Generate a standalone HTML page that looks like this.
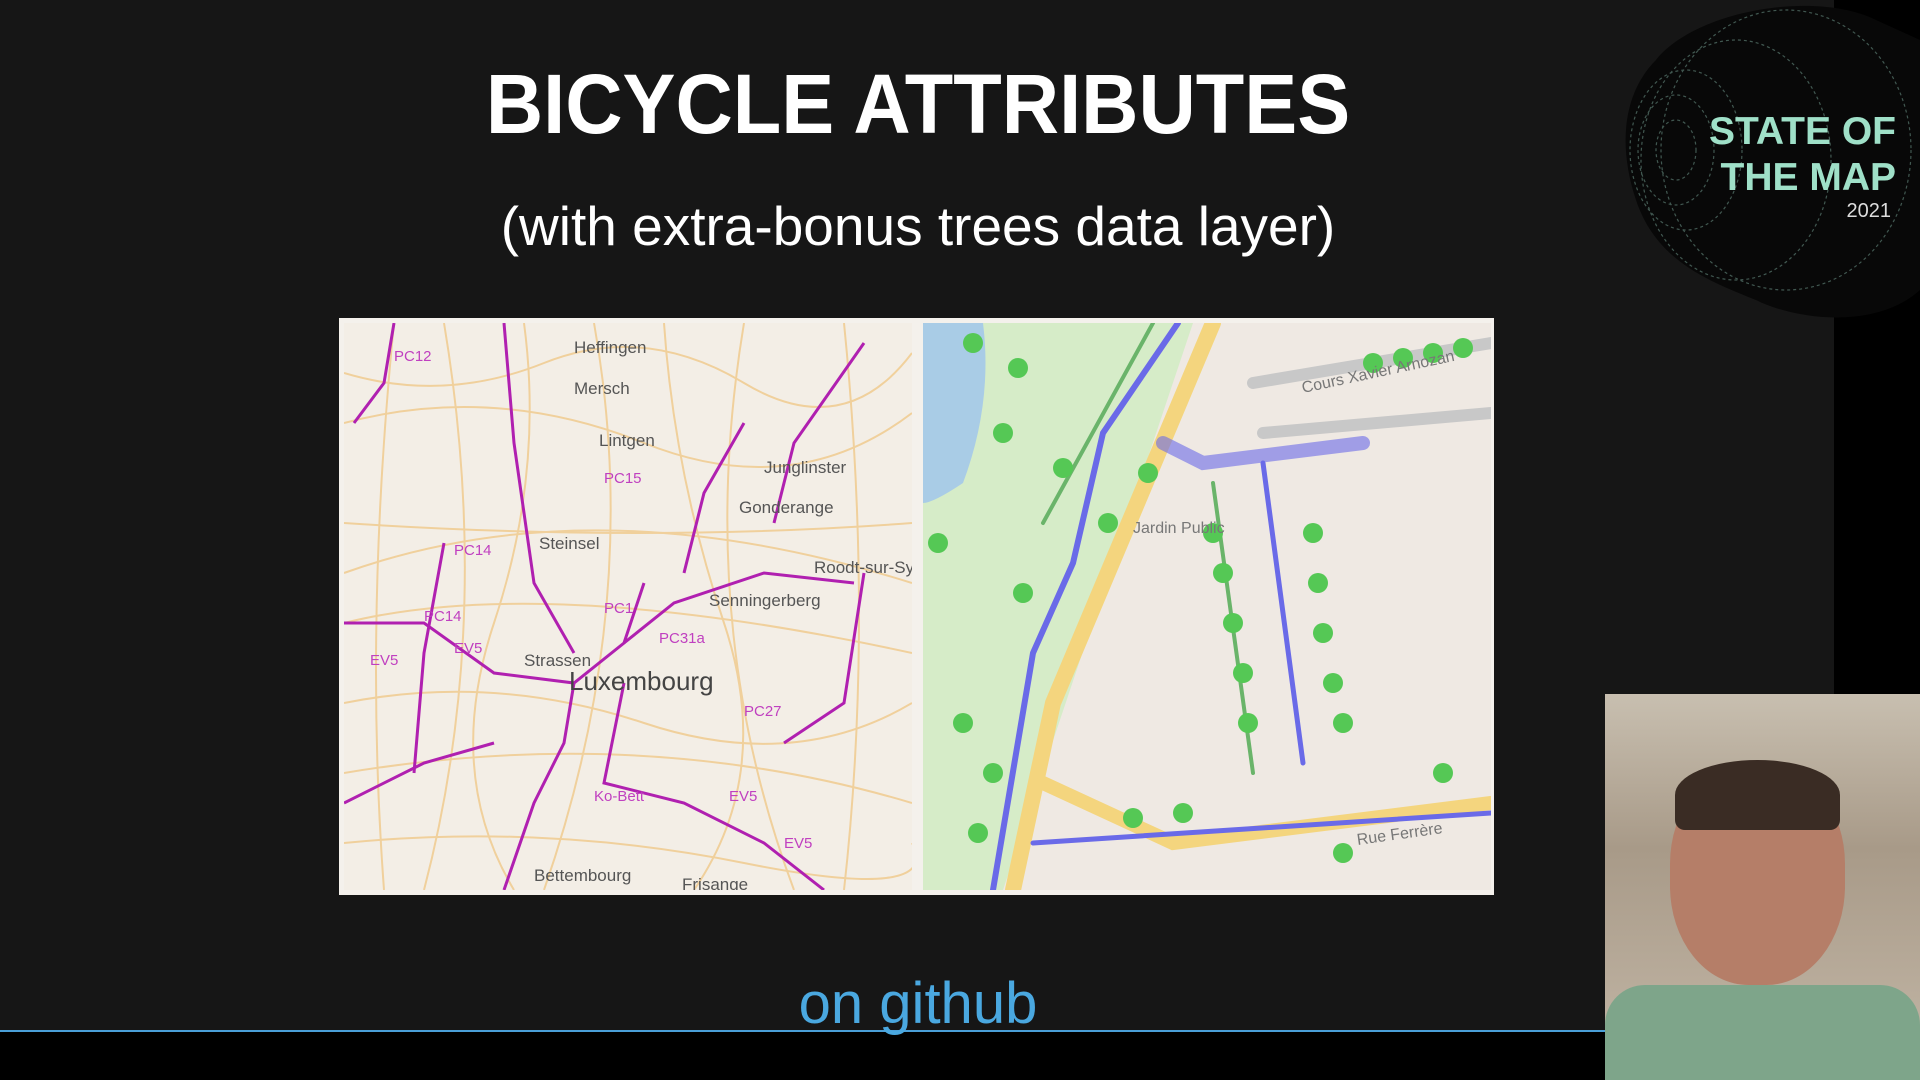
<!DOCTYPE html>
<html><head><meta charset="utf-8"><style>
body{margin:0;width:1920px;height:1080px;background:#161616;position:relative;overflow:hidden;font-family:"Liberation Sans",sans-serif}
.t{position:absolute;left:0;width:1836px;text-align:center;color:#fff}
</style></head><body>
<div style="position:absolute;left:1834px;top:0;width:86px;height:1080px;background:#000"></div>
<div style="position:absolute;left:0;top:1032px;width:1920px;height:48px;background:#000"></div>
<div style="position:absolute;left:0;top:1030px;width:1605px;height:2px;background:#4a9fd8"></div>
<div class="t" style="top:56px;font-size:84px;font-weight:bold;transform:scaleX(0.945);transform-origin:918px 0">BICYCLE ATTRIBUTES</div>
<div class="t" style="top:194px;font-size:55px">(with extra-bonus trees data layer)</div>
<div class="t" style="top:970px;font-size:58px;color:#4aa8e0">on github</div>
<svg style="position:absolute;left:1616px;top:0" width="304" height="325" viewBox="0 0 304 325">
<path d="M40 60 C80 10 200 -10 260 20 L304 40 L304 290 C260 330 180 320 140 300 C90 280 40 260 20 200 C0 140 10 90 40 60Z" fill="#080808"/>
<g fill="none" stroke="#5a7a70" stroke-width="1.2" stroke-dasharray="3 3" opacity=".7">
<ellipse cx="60" cy="150" rx="20" ry="30"/><ellipse cx="60" cy="150" rx="38" ry="55"/><ellipse cx="70" cy="150" rx="56" ry="80"/><ellipse cx="120" cy="160" rx="95" ry="120"/><ellipse cx="170" cy="150" rx="125" ry="140"/></g>
<text x="280" y="144" text-anchor="end" font-size="39" font-weight="bold" fill="#9fe0c8" font-family="Liberation Sans">STATE OF</text>
<text x="280" y="190" text-anchor="end" font-size="39" font-weight="bold" fill="#9fe0c8" font-family="Liberation Sans">THE MAP</text>
<text x="275" y="217" text-anchor="end" font-size="20" fill="#ddd" font-family="Liberation Sans">2021</text>
</svg>
<div style="position:absolute;left:339px;top:318px;width:1155px;height:577px;background:#f4f1ec"></div>
<svg style="position:absolute;left:344px;top:323px" width="568" height="567" viewBox="0 0 568 567">
<rect width="568" height="567" fill="#f3eee6"/>
<g fill="none" stroke="#f0c98a" stroke-width="2" opacity=".8">
<path d="M0 100 Q150 60 300 120 T568 90"/><path d="M0 300 Q200 250 568 330"/><path d="M100 0 Q150 300 80 567"/><path d="M400 0 Q350 300 450 567"/><path d="M0 450 Q300 400 568 480"/><path d="M250 0 Q300 280 200 567"/><path d="M0 200 Q300 220 568 200"/>
<path d="M0 50 Q100 80 200 40 T400 60 T568 30"/><path d="M0 380 Q150 350 300 400 T568 380"/><path d="M0 520 Q200 500 400 540 T568 520"/><path d="M50 0 Q20 300 40 567"/><path d="M500 0 Q530 300 500 567"/><path d="M320 0 Q330 150 380 300 T350 567"/><path d="M180 0 Q200 150 150 300 T170 567"/><path d="M0 250 Q250 160 568 260"/></g>
<g fill="none" stroke="#b020b0" stroke-width="3">
<path d="M50 0 L40 60 L10 100"/><path d="M160 0 L170 120 L190 260 L230 330"/><path d="M0 300 L80 300 L150 350 L230 360 L280 320 L300 260"/><path d="M230 360 L220 420 L190 480 L160 567"/><path d="M280 320 L330 280 L420 250 L510 260"/><path d="M400 100 L360 170 L340 250"/><path d="M520 20 L450 120 L430 200"/><path d="M280 360 L260 460 L340 480 L420 520 L480 567"/><path d="M0 480 L80 440 L150 420"/><path d="M520 250 L500 380 L440 420"/><path d="M100 220 L80 330 L70 450"/></g>
<g font-family="Liberation Sans" font-size="17" fill="#555"><text x="230" y="30">Heffingen</text><text x="230" y="71">Mersch</text><text x="255" y="123">Lintgen</text><text x="420" y="150">Junglinster</text><text x="395" y="190">Gonderange</text><text x="195" y="226">Steinsel</text><text x="470" y="250">Roodt-sur-Syre</text><text x="365" y="283">Senningerberg</text><text x="180" y="343">Strassen</text><text x="190" y="558">Bettembourg</text><text x="338" y="567">Frisange</text>
<text x="225" y="367" font-size="26" fill="#444">Luxembourg</text></g>
<g font-family="Liberation Sans" font-size="15" fill="#c040c0"><text x="50" y="38">PC12</text><text x="260" y="160">PC15</text><text x="110" y="232">PC14</text><text x="80" y="298">PC14</text><text x="26" y="342">EV5</text><text x="110" y="330">EV5</text><text x="260" y="290">PC1</text><text x="315" y="320">PC31a</text><text x="400" y="393">PC27</text><text x="385" y="478">EV5</text><text x="440" y="525">EV5</text><text x="250" y="478">Ko-Bett</text></g>
</svg>
<svg style="position:absolute;left:923px;top:323px" width="568" height="567" viewBox="0 0 568 567">
<rect width="568" height="567" fill="#efe9e3"/>
<path d="M0 0 L270 0 L80 567 L0 567Z" fill="#d6ecc8"/>
<path d="M0 0 L60 0 Q70 80 40 160 Q10 180 0 180Z" fill="#a9cce6"/>
<g fill="none" stroke-linecap="round">
<path d="M290 0 L130 380 L90 567" stroke="#f4d57e" stroke-width="16"/>
<path d="M120 460 L250 520 L568 480" stroke="#f4d57e" stroke-width="14"/>
<path d="M330 60 L568 20" stroke="#c8c8c8" stroke-width="12"/><path d="M340 110 L568 90" stroke="#c8c8c8" stroke-width="12"/>
<path d="M255 0 L180 110 L150 240 L110 330 L70 567" stroke="#6a6ae8" stroke-width="6"/>
<path d="M240 120 L280 140 L440 120" stroke="#6a6ae8" stroke-width="14" opacity=".6"/>
<path d="M340 140 L380 440" stroke="#6a6ae8" stroke-width="5"/>
<path d="M110 520 L568 490" stroke="#6a6ae8" stroke-width="5"/>
<path d="M230 0 L120 200" stroke="#6ab46a" stroke-width="4"/><path d="M290 160 L330 450" stroke="#6ab46a" stroke-width="4"/></g>
<g fill="#55c855"><circle cx="50" cy="20" r="10"/><circle cx="95" cy="45" r="10"/><circle cx="80" cy="110" r="10"/><circle cx="140" cy="145" r="10"/><circle cx="15" cy="220" r="10"/><circle cx="100" cy="270" r="10"/><circle cx="40" cy="400" r="10"/><circle cx="70" cy="450" r="10"/><circle cx="55" cy="510" r="10"/><circle cx="290" cy="210" r="10"/><circle cx="300" cy="250" r="10"/><circle cx="310" cy="300" r="10"/><circle cx="320" cy="350" r="10"/><circle cx="325" cy="400" r="10"/><circle cx="390" cy="210" r="10"/><circle cx="395" cy="260" r="10"/><circle cx="400" cy="310" r="10"/><circle cx="410" cy="360" r="10"/><circle cx="420" cy="400" r="10"/><circle cx="210" cy="495" r="10"/><circle cx="260" cy="490" r="10"/><circle cx="450" cy="40" r="10"/><circle cx="480" cy="35" r="10"/><circle cx="510" cy="30" r="10"/><circle cx="540" cy="25" r="10"/><circle cx="420" cy="530" r="10"/><circle cx="520" cy="450" r="10"/><circle cx="225" cy="150" r="10"/><circle cx="185" cy="200" r="10"/></g>
<g font-family="Liberation Sans" font-size="16" fill="#777"><text x="380" y="70" transform="rotate(-12 380 70)">Cours Xavier Arnozan</text><text x="210" y="210">Jardin Public</text><text x="520" y="510" transform="rotate(-8 520 510)" text-anchor="end">Rue Ferrère</text></g>
</svg>
<div style="position:absolute;left:1605px;top:694px;width:315px;height:386px;background:linear-gradient(#c8bfb0,#a89a88 40%,#c4b8a8)"></div>
<div style="position:absolute;left:1670px;top:765px;width:175px;height:220px;border-radius:45%;background:#b57e68"></div>
<div style="position:absolute;left:1675px;top:760px;width:165px;height:70px;border-radius:50% 50% 10px 10px;background:#3a2c24"></div>
<div style="position:absolute;left:1605px;top:985px;width:315px;height:95px;border-radius:40px 40px 0 0;background:#7ea58a"></div>
</body></html>
